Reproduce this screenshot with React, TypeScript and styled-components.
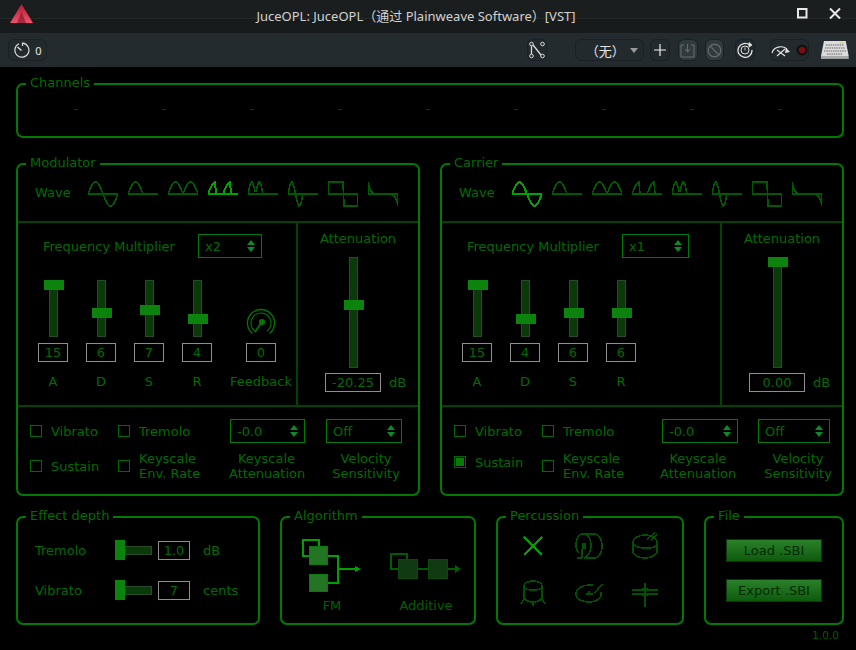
import styled, { createGlobalStyle } from 'styled-components';

const GlobalStyle = createGlobalStyle`
  html, body {
    margin: 0;
    background: #000;
  }
  body {
    width: 856px;
    height: 650px;
    overflow: hidden;
    font-family: 'DejaVu Sans', sans-serif;
  }
  * {
    box-sizing: border-box;
  }
`;

const Window = styled.div`
  display: flex;
  flex-direction: column;
  width: 856px;
  height: 650px;
`;

const TitleBar = styled.header`
  position: relative;
  display: flex;
  align-items: center;
  justify-content: center;
  height: 33px;
  background: linear-gradient(#1b1e1f 0, #1b1e1f 18px, #272a2a 18px, #272a2a 19px, #181b1c 19px);
  color: #d2d2d2;
  font: 13px 'Noto Sans', 'Noto Sans CJK SC', sans-serif;
`;

const Logo = styled.svg`
  position: absolute;
  left: 10px;
  top: 4px;
`;

const WindowButtons = styled.div`
  position: absolute;
  right: 15px;
  top: 8px;
  display: flex;
  gap: 21px;
`;

const Title = styled.span`
  margin-left: -24px;
  margin-top: -2px;
`;

const ToolBar = styled.div`
  display: flex;
  align-items: center;
  height: 34px;
  padding: 0 6px 0 8px;
  background: #232b2f;
`;

const ToolButton = styled.div<{ $width?: number; $left?: number; $dim?: boolean }>`
  display: flex;
  align-items: center;
  justify-content: center;
  gap: 5px;
  width: ${(p) => p.$width ?? 20}px;
  height: 22px;
  margin-left: ${(p) => p.$left ?? 0}px;
  background: ${(p) => (p.$dim ? '#30393c' : '#222a2e')};
  border: 1px solid #1a2124;
  border-radius: 6px;
  color: #e4e4e4;
  font: 11px 'Noto Sans', sans-serif;
`;

const PresetSelect = styled(ToolButton)`
  position: relative;
  justify-content: flex-start;
  padding-left: 10px;
  font: 13px 'Noto Sans CJK SC', sans-serif;
  &::after {
    content: '';
    position: absolute;
    right: 5px;
    top: 8px;
    border: 4px solid transparent;
    border-top: 5px solid #9a9a9a;
  }
`;

const Main = styled.main`
  display: flex;
  flex-direction: column;
  padding: 9px 12px 0 16px;
`;

const Group = styled.fieldset<{ $width: number; $height: number }>`
  width: ${(p) => p.$width}px;
  height: ${(p) => p.$height}px;
  min-width: 0;
  margin: 0;
  padding: 0;
  border: 2px solid #007a00;
  border-radius: 7px;
`;

const Legend = styled.legend`
  margin-left: 8px;
  padding: 0 4px;
  color: #006c00;
  font-size: 13px;
  line-height: 16px;
  height: 16px;
  transform: translateY(-1px);
`;

const Channels = styled.div`
  display: grid;
  grid-template-columns: repeat(9, 88px);
  padding: 10px 0 0 14px;
  color: #005000;
  font-size: 12px;
  text-align: center;
`;

const Operators = styled.div`
  display: flex;
  gap: 20px;
  width: 828px;
  margin-top: 18px;
`;

const WaveRow = styled.div`
  display: flex;
  gap: 10px;
  height: 51px;
  padding: 9px 0 0 17px;
  border-bottom: 2px solid #004400;
`;

const WaveLabel = styled.span`
  width: 43px;
  padding-top: 4px;
  color: #006c00;
  font-size: 13px;
`;

const Middle = styled.div`
  display: grid;
  grid-template-columns: 280px 1fr;
  height: 184px;
  border-bottom: 2px solid #004400;
`;

const Envelope = styled.div`
  padding: 11px 0 0 11px;
  border-right: 2px solid #004400;
`;

const FreqRow = styled.div`
  display: flex;
  align-items: center;
  height: 24px;
  padding-left: 14px;
  margin-bottom: 22px;
  color: #006c00;
  font-size: 13px;
`;

const FreqLabel = styled.span`
  width: 155px;
`;

const Combo = styled.div<{ $width: number }>`
  display: flex;
  align-items: center;
  justify-content: space-between;
  width: ${(p) => p.$width}px;
  height: 24px;
  padding: 0 6px 0 6px;
  border: 1px solid #007a00;
  color: #006c00;
  font-size: 13px;
`;

const Sliders = styled.div`
  display: flex;
`;

const SliderColumn = styled.div<{ $left?: number }>`
  display: flex;
  flex-direction: column;
  align-items: center;
  justify-content: flex-end;
  width: 48px;
  margin-left: ${(p) => p.$left ?? 0}px;
  color: #006c00;
  font-size: 13px;
  white-space: nowrap;
`;

const Track = styled.div<{ $length: number }>`
  position: relative;
  width: 9px;
  height: ${(p) => p.$length}px;
  background: #0a3a0a;
  border: 1px solid #2a4a2a;
`;

const Thumb = styled.div`
  position: absolute;
  left: -6px;
  width: 20px;
  height: 10px;
  background: #0c830c;
`;

const ValueBox = styled.div<{ $width: number }>`
  display: flex;
  align-items: center;
  justify-content: center;
  width: ${(p) => p.$width}px;
  height: 19px;
  flex: none;
  border: 1px solid #8f8f8f;
  color: #006c00;
  font-size: 13px;
`;

const ColumnCaption = styled.span`
  margin-top: 12px;
  line-height: 16px;
`;

const AttenuationPanel = styled.div`
  display: flex;
  flex-direction: column;
  padding-top: 8px;
  color: #006c00;
  font-size: 13px;
`;

const AttenuationTitle = styled.span`
  text-align: center;
  line-height: 16px;
  margin-bottom: 10px;
`;

const AttenuationBody = styled.div`
  display: grid;
  grid-template-columns: 56px auto;
  justify-content: start;
  column-gap: 8px;
  row-gap: 5px;
  padding-left: 27px;
  justify-items: center;
  align-items: center;
`;

const OptionsGrid = styled.div<{ $second: number; $third: number; $fourth: number; $gap: number }>`
  display: grid;
  grid-template-columns: 88px ${(p) => p.$second}px ${(p) => p.$third}px ${(p) => p.$fourth}px;
  column-gap: 0;
  grid-template-rows: 24px 30px;
  row-gap: 8px;
  padding: 12px 0 0 12px;
  color: #006c00;
  font-size: 13px;
  line-height: 15px;
  & > :nth-child(4n) {
    margin-left: ${(p) => p.$gap}px;
  }
`;

const Check = styled.label<{ $raised?: boolean }>`
  display: flex;
  align-items: center;
  gap: 9px;
  margin-bottom: ${(p) => (p.$raised ? 8 : 0)}px;
`;

const CheckBox = styled.span<{ $checked?: boolean }>`
  display: flex;
  align-items: center;
  justify-content: center;
  width: 12px;
  height: 12px;
  flex: none;
  border: 1px solid #006a00;
  &::after {
    content: '';
    display: ${(p) => (p.$checked ? 'block' : 'none')};
    width: 8px;
    height: 8px;
    background: #0a7a0a;
  }
`;

const Caption = styled.div<{ $nudge: number }>`
  white-space: nowrap;
  text-align: center;
  transform: translateX(${(p) => p.$nudge}px);
`;

const BottomRow = styled.div`
  display: flex;
  gap: 20px;
  width: 828px;
  margin-top: 13px;
`;

const DepthList = styled.div`
  display: flex;
  flex-direction: column;
  gap: 20px;
  padding: 15px 0 0 17px;
  color: #006c00;
  font-size: 13px;
`;

const DepthRow = styled.div`
  display: flex;
  align-items: center;
`;

const DepthLabel = styled.span`
  width: 80px;
`;

const HorizontalSlider = styled.div`
  display: flex;
  align-items: center;
  width: 37px;
  height: 20px;
  margin-right: 6px;
`;

const HorizontalThumb = styled.div`
  width: 10px;
  height: 20px;
  background: #0c830c;
`;

const HorizontalTrack = styled.div`
  flex: 1;
  height: 9px;
  background: #0a3a0a;
  border: 1px solid #2a4a2a;
`;

const DepthUnit = styled.span`
  margin-left: 13px;
`;

const AlgorithmRow = styled.div`
  display: flex;
  gap: 26px;
  padding: 14px 0 0 20px;
`;

const Algorithm = styled.figure`
  display: flex;
  flex-direction: column;
  align-items: center;
  margin: 0;
  color: #006000;
  font-size: 13px;
  line-height: 16px;
`;

const AlgorithmName = styled.figcaption`
  margin-top: 5px;
`;

const PercussionGrid = styled.div`
  display: grid;
  grid-template-columns: repeat(3, 30px);
  grid-auto-rows: 30px;
  gap: 16px 26px;
  padding: 6px 0 0 20px;
`;

const FileButtons = styled.div`
  display: flex;
  flex-direction: column;
  gap: 17px;
  padding: 14px 0 0 20px;
`;

const FileButton = styled.button`
  width: 96px;
  height: 23px;
  padding: 0;
  background: linear-gradient(#2a812a, #0e5a0e);
  border: 1px solid #0a3c0a;
  color: #032b03;
  font: 13px 'DejaVu Sans', sans-serif;
`;

const Version = styled.div`
  width: 823px;
  padding-top: 3px;
  color: #005c00;
  font-size: 10.5px;
  line-height: 14px;
  text-align: right;
`;

const shapes: ((t: number) => number)[] = [
  (t) => Math.sin(2 * Math.PI * t),
  (t) => (t < 0.5 ? Math.sin(2 * Math.PI * t) : 0),
  (t) => Math.abs(Math.sin(2 * Math.PI * t)),
  (t) => (t % 0.5 < 0.25 ? Math.sin(2 * Math.PI * (t % 0.5)) : 0),
  (t) => (t < 0.5 ? Math.abs(Math.sin(4 * Math.PI * t)) : 0),
  (t) => (t < 0.5 ? Math.sin(4 * Math.PI * t) : 0),
  (t) => (t < 0.5 ? 1 : -1),
  (t) => (t < 0.5 ? Math.exp(-14 * t) : -Math.exp(-14 * (1 - t))),
];

function Wave({ index, active }: { index: number; active?: boolean }) {
  let d = 'M0 13H30M0 13';
  for (let x = 0; x <= 30; x += 1) {
    const y = 13 - shapes[index](x / 30.001) * 12;
    d += `L${x} ${y.toFixed(1)}`;
  }
  d += 'L30 13';
  return (
    <svg width="30" height="27" viewBox="0 0 30 27">
      <path
        d={d}
        fill="none"
        stroke={active ? '#00a400' : '#005a00'}
        strokeWidth={active ? 2 : 1.6}
        shapeRendering="crispEdges"
      />
    </svg>
  );
}

function Arrows() {
  return (
    <svg width="8" height="12" viewBox="0 0 8 12">
      <path d="M4 0 8 5H0ZM0 7H8L4 12Z" fill="#0a8a2a" />
    </svg>
  );
}

function Select({ width, value }: { width: number; value: string }) {
  return (
    <Combo $width={width}>
      {value}
      <Arrows />
    </Combo>
  );
}

function Fader({ name, value, max = 15 }: { name: string; value: number; max?: number }) {
  return (
    <SliderColumn>
      <Track $length={57}>
        <Thumb style={{ top: (1 - value / max) * 47 - 1 }} />
      </Track>
      <ValueBox $width={30} style={{ marginTop: 6 }}>
        {value}
      </ValueBox>
      <ColumnCaption>{name}</ColumnCaption>
    </SliderColumn>
  );
}

function Knob() {
  return (
    <svg width="30" height="30" viewBox="0 0 30 30" style={{ marginBottom: 5 }}>
      <g fill="none" stroke="#007a00">
        <path d="M6.5 25.5a13.5 13.5 0 1 1 17 0" strokeWidth="1.3" />
        <path d="M9 23a10 10 0 1 1 12 0" strokeWidth="1.1" />
        <path d="M9 24 15.5 14.5" strokeWidth="1.6" />
      </g>
      <circle cx="16" cy="14" r="3" fill="#007a00" />
    </svg>
  );
}

interface OperatorProps {
  title: string;
  wave: number;
  multiplier: string;
  comboWidth: number;
  adsr: number[];
  feedback?: number;
  attenuation: string;
  attenuationTop: number;
  sustain?: boolean;
  columns: [number, number, number, number];
  nudges: [number, number];
}

function Operator(props: OperatorProps) {
  const { title, wave, multiplier, comboWidth, adsr, feedback, attenuation, attenuationTop, sustain, columns, nudges } = props;
  return (
    <Group $width={404} $height={340}>
      <Legend>{title}</Legend>
      <WaveRow>
        <WaveLabel>Wave</WaveLabel>
        {shapes.map((_, i) => (
          <Wave key={i} index={i} active={i === wave} />
        ))}
      </WaveRow>
      <Middle>
        <Envelope>
          <FreqRow>
            <FreqLabel>Frequency Multiplier</FreqLabel>
            <Select width={comboWidth} value={multiplier} />
          </FreqRow>
          <Sliders>
            {['A', 'D', 'S', 'R'].map((name, i) => (
              <Fader key={name} name={name} value={adsr[i]} />
            ))}
            {feedback !== undefined && (
              <SliderColumn $left={16}>
                <Knob />
                <ValueBox $width={30}>{feedback}</ValueBox>
                <ColumnCaption>Feedback</ColumnCaption>
              </SliderColumn>
            )}
          </Sliders>
        </Envelope>
        <AttenuationPanel>
          <AttenuationTitle>Attenuation</AttenuationTitle>
          <AttenuationBody>
            <Track $length={111}>
              <Thumb style={{ top: attenuationTop }} />
            </Track>
            <span />
            <ValueBox $width={56}>{attenuation}</ValueBox>
            <span>dB</span>
          </AttenuationBody>
        </AttenuationPanel>
      </Middle>
      <OptionsGrid $second={columns[0]} $third={columns[1]} $fourth={columns[2]} $gap={columns[3]}>
        <Check>
          <CheckBox />
          Vibrato
        </Check>
        <Check>
          <CheckBox />
          Tremolo
        </Check>
        <Select width={columns[1]} value="-0.0" />
        <Select width={columns[2] - columns[3]} value="Off" />
        <Check $raised={sustain}>
          <CheckBox $checked={sustain} />
          Sustain
        </Check>
        <Check>
          <CheckBox />
          <span>
            Keyscale
            <br />
            Env. Rate
          </span>
        </Check>
        <Caption $nudge={nudges[0]}>
          Keyscale
          <br />
          Attenuation
        </Caption>
        <Caption $nudge={nudges[1]}>
          Velocity
          <br />
          Sensitivity
        </Caption>
      </OptionsGrid>
    </Group>
  );
}

function FmDiagram() {
  return (
    <svg width="60" height="54" viewBox="0 0 60 54">
      <g fill="none" stroke="#00a000" strokeWidth="2">
        <path d="M7 17H1V1H17V7" />
        <path d="M26 17H36V44H26M36 30H54" />
      </g>
      <path d="M53 27 59 30 53 33Z" fill="#00a000" />
      <rect x="7.5" y="7.5" width="18" height="18" fill="#237523" stroke="#0a7a0a" />
      <rect x="7.5" y="35.5" width="18" height="17" fill="#237523" stroke="#0a7a0a" />
    </svg>
  );
}

function AdditiveDiagram() {
  return (
    <svg width="76" height="54" viewBox="0 0 76 54">
      <g fill="none" stroke="#005c00" strokeWidth="2">
        <path d="M10 30H3V15H19V21" />
        <path d="M29 30H40M59 30H68" />
      </g>
      <path d="M67 26 73 30 67 34Z" fill="#005c00" />
      <rect x="10.5" y="20.5" width="19" height="19" fill="#123a12" stroke="#0a4a0a" />
      <rect x="40.5" y="20.5" width="19" height="19" fill="#123a12" stroke="#0a4a0a" />
    </svg>
  );
}

const percussionPaths = [
  'M6 6 24 24M24 6 6 24',
  'M9 3H20C25 3 28 8 28 15S25 27 20 27H12M9 3C4 3 2 8 2 14 2 18 3 20 5 21M10 3C14 3 17 8 17 14S14 25 10 27M9 13H11V17H9ZM8 18V27M3 27H8',
  'M3 12C3 7 9 4 15 4S27 7 27 12 21 17 15 17 3 15 3 12ZM3 12V21C5 25 10 27 15 27S25 25 27 21V12M17 8 25 2M21 9 27 4',
  'M6 9C6 6 10 4 15 4S24 6 24 9 20 13 15 13 6 12 6 9ZM6 9V21C8 24 11 25 15 25S22 24 24 21V9M6 22 3 27M24 22 27 27M15 25V29',
  'M19 8H15C8 8 2 12 2 17S8 25 15 25 27 22 27 17V15M21 16 28 7M12 17H19M15 14V17',
  'M2 13H28M2 17H28M15 6V30M12 12H18M12 18H18',
];

function PercussionIcon({ index }: { index: number }) {
  return (
    <svg width="30" height="30" viewBox="0 0 30 30">
      <path
        d={percussionPaths[index]}
        fill="none"
        stroke={index === 0 ? '#00a000' : '#005200'}
        strokeWidth="1.6"
        shapeRendering="crispEdges"
      />
    </svg>
  );
}

function TitleLogo() {
  return (
    <Logo width="23" height="20" viewBox="0 0 23 20">
      <defs>
        <linearGradient id="logoFill" x1="0" y1="0" x2="0" y2="1">
          <stop offset="0" stopColor="#b01c34" />
          <stop offset="1" stopColor="#f0506a" />
        </linearGradient>
      </defs>
      <path d="M11.5 0 23 19H0Z" fill="url(#logoFill)" />
      <path d="M11.5 8 16 19H7Z" fill="#7a1226" opacity=".6" />
    </Logo>
  );
}

function Keyboard() {
  return (
    <svg width="30" height="20" viewBox="0 0 30 20" style={{ marginLeft: 11 }}>
      <path d="M4 1H26L29 16H1Z" fill="#dcdcdc" />
      <path d="M1 16H29V19H1Z" fill="#a8a8a8" />
      <path d="M6 5H24M5 8H25M4 11H26M7 14H23" stroke="#8a8a8a" strokeWidth="1.5" strokeDasharray="1.5 .8" />
      <path d="M20 3H24" stroke="#d8c850" strokeWidth="1" />
    </svg>
  );
}

function App() {
  return (
    <Window>
      <GlobalStyle />
      <TitleBar>
        <TitleLogo />
        <Title>JuceOPL: JuceOPL（通过 Plainweave Software）[VST]</Title>
        <WindowButtons>
          <svg width="11" height="11" viewBox="0 0 11 11">
            <rect x="1" y="1" width="8.5" height="8.5" fill="none" stroke="#e8e8e8" strokeWidth="2" />
          </svg>
          <svg width="12" height="11" viewBox="0 0 12 11">
            <path d="M1 .5 11 10.500M11 .5 1 10.500" stroke="#e8e8e8" strokeWidth="2" />
          </svg>
        </WindowButtons>
      </TitleBar>
      <ToolBar>
        <ToolButton $width={39}>
          <svg width="17" height="17" viewBox="0 0 17 17">
            <path d="M6 1.800a7 7 0 1 0 3.500-.6V4" fill="none" stroke="#dcdcdc" strokeWidth="1.200" />
            <path d="M4.500 5 8.500 8.500" stroke="#dcdcdc" strokeWidth="1.500" />
          </svg>
          0
        </ToolButton>
        <ToolButton $left={480}>
          <svg width="18" height="18" viewBox="0 0 18 18">
            <g fill="none" stroke="#dcdcdc">
              <circle cx="3.500" cy="3" r="1.800" />
              <circle cx="14.500" cy="3" r="1.800" />
              <circle cx="3.500" cy="15" r="1.800" />
              <circle cx="14.500" cy="15" r="1.800" />
              <path d="M3.500 5V13M5 4 13 14" strokeWidth="1.300" />
            </g>
          </svg>
        </ToolButton>
        <PresetSelect as="div" $width={70} $left={28}>
          （无）
        </PresetSelect>
        <ToolButton $left={6}>
          <svg width="14" height="14" viewBox="0 0 14 14">
            <path d="M7 1V13M1 7H13" stroke="#eee" strokeWidth="1.200" />
          </svg>
        </ToolButton>
        <ToolButton $left={8} $dim>
          <svg width="15" height="15" viewBox="0 0 15 15">
            <path d="M4 2H1V14H14V2H11M7.500 1V8M5 6 7.500 9 10 6" fill="none" stroke="#626c6e" strokeWidth="1.100" />
          </svg>
        </ToolButton>
        <ToolButton $left={7} $dim>
          <svg width="15" height="15" viewBox="0 0 15 15">
            <circle cx="7.500" cy="7.500" r="6.300" fill="none" stroke="#5e6769" strokeWidth="1.400" />
            <path d="M3 3 12 12" stroke="#5e6769" strokeWidth="1.400" />
          </svg>
        </ToolButton>
        <ToolButton $left={11}>
          <svg width="16" height="16" viewBox="0 0 16 16">
            <path d="M12.500 3A7 7 0 1 0 15 8" fill="none" stroke="#e4e4e4" strokeWidth="1.300" />
            <circle cx="8" cy="8" r="4" fill="none" stroke="#e4e4e4" />
            <path d="M8 5.500V8.500M12 .5 15 3 12 5Z" stroke="#e4e4e4" fill="#e4e4e4" strokeWidth=".8" />
          </svg>
        </ToolButton>
        <ToolButton $width={39} $left={15}>
          <svg width="20" height="14" viewBox="0 0 20 14">
            <path d="M1 10a9 8 0 0 1 15-4M6 13 14 6M6 7 14 13" fill="none" stroke="#e4e4e4" strokeWidth="1.100" />
            <path d="M15 5 19 9 14 10Z" fill="#e4e4e4" />
          </svg>
          <svg width="12" height="12" viewBox="0 0 12 12">
            <circle cx="6" cy="6" r="5.500" fill="#111" />
            <circle cx="6" cy="6" r="3.200" fill="#7a0f14" />
          </svg>
        </ToolButton>
        <Keyboard />
      </ToolBar>
      <Main>
        <Group $width={828} $height={62}>
          <Legend>Channels</Legend>
          <Channels>
            {Array.from({ length: 9 }, (_, i) => (
              <span key={i}>-</span>
            ))}
          </Channels>
        </Group>
        <Operators>
          <Operator
            title="Modulator"
            wave={3}
            multiplier="x2"
            comboWidth={64}
            adsr={[15, 6, 7, 4]}
            feedback={0}
            attenuation="-20.25"
            attenuationTop={42}
            columns={[112, 75, 97, 21]}
            nudges={[-1, 2]}
          />
          <Operator
            title="Carrier"
            wave={0}
            multiplier="x1"
            comboWidth={67}
            adsr={[15, 4, 6, 6]}
            attenuation="0.00"
            attenuationTop={-1}
            sustain
            columns={[120, 76, 92, 20]}
            nudges={[-2, 4]}
          />
        </Operators>
        <BottomRow>
          <Group $width={244} $height={116}>
            <Legend>Effect depth</Legend>
            <DepthList>
              <DepthRow>
                <DepthLabel>Tremolo</DepthLabel>
                <HorizontalSlider>
                  <HorizontalThumb />
                  <HorizontalTrack />
                </HorizontalSlider>
                <ValueBox $width={32}>1.0</ValueBox>
                <DepthUnit>dB</DepthUnit>
              </DepthRow>
              <DepthRow>
                <DepthLabel>Vibrato</DepthLabel>
                <HorizontalSlider>
                  <HorizontalThumb />
                  <HorizontalTrack />
                </HorizontalSlider>
                <ValueBox $width={32}>7</ValueBox>
                <DepthUnit>cents</DepthUnit>
              </DepthRow>
            </DepthList>
          </Group>
          <Group $width={196} $height={116}>
            <Legend>Algorithm</Legend>
            <AlgorithmRow>
              <Algorithm>
                <FmDiagram />
                <AlgorithmName>FM</AlgorithmName>
              </Algorithm>
              <Algorithm>
                <AdditiveDiagram />
                <AlgorithmName>Additive</AlgorithmName>
              </Algorithm>
            </AlgorithmRow>
          </Group>
          <Group $width={188} $height={116}>
            <Legend>Percussion</Legend>
            <PercussionGrid>
              {percussionPaths.map((_, i) => (
                <PercussionIcon key={i} index={i} />
              ))}
            </PercussionGrid>
          </Group>
          <Group $width={140} $height={116}>
            <Legend>File</Legend>
            <FileButtons>
              <FileButton>Load .SBI</FileButton>
              <FileButton>Export .SBI</FileButton>
            </FileButtons>
          </Group>
        </BottomRow>
        <Version>1.0.0</Version>
      </Main>
    </Window>
  );
}

export default App;
